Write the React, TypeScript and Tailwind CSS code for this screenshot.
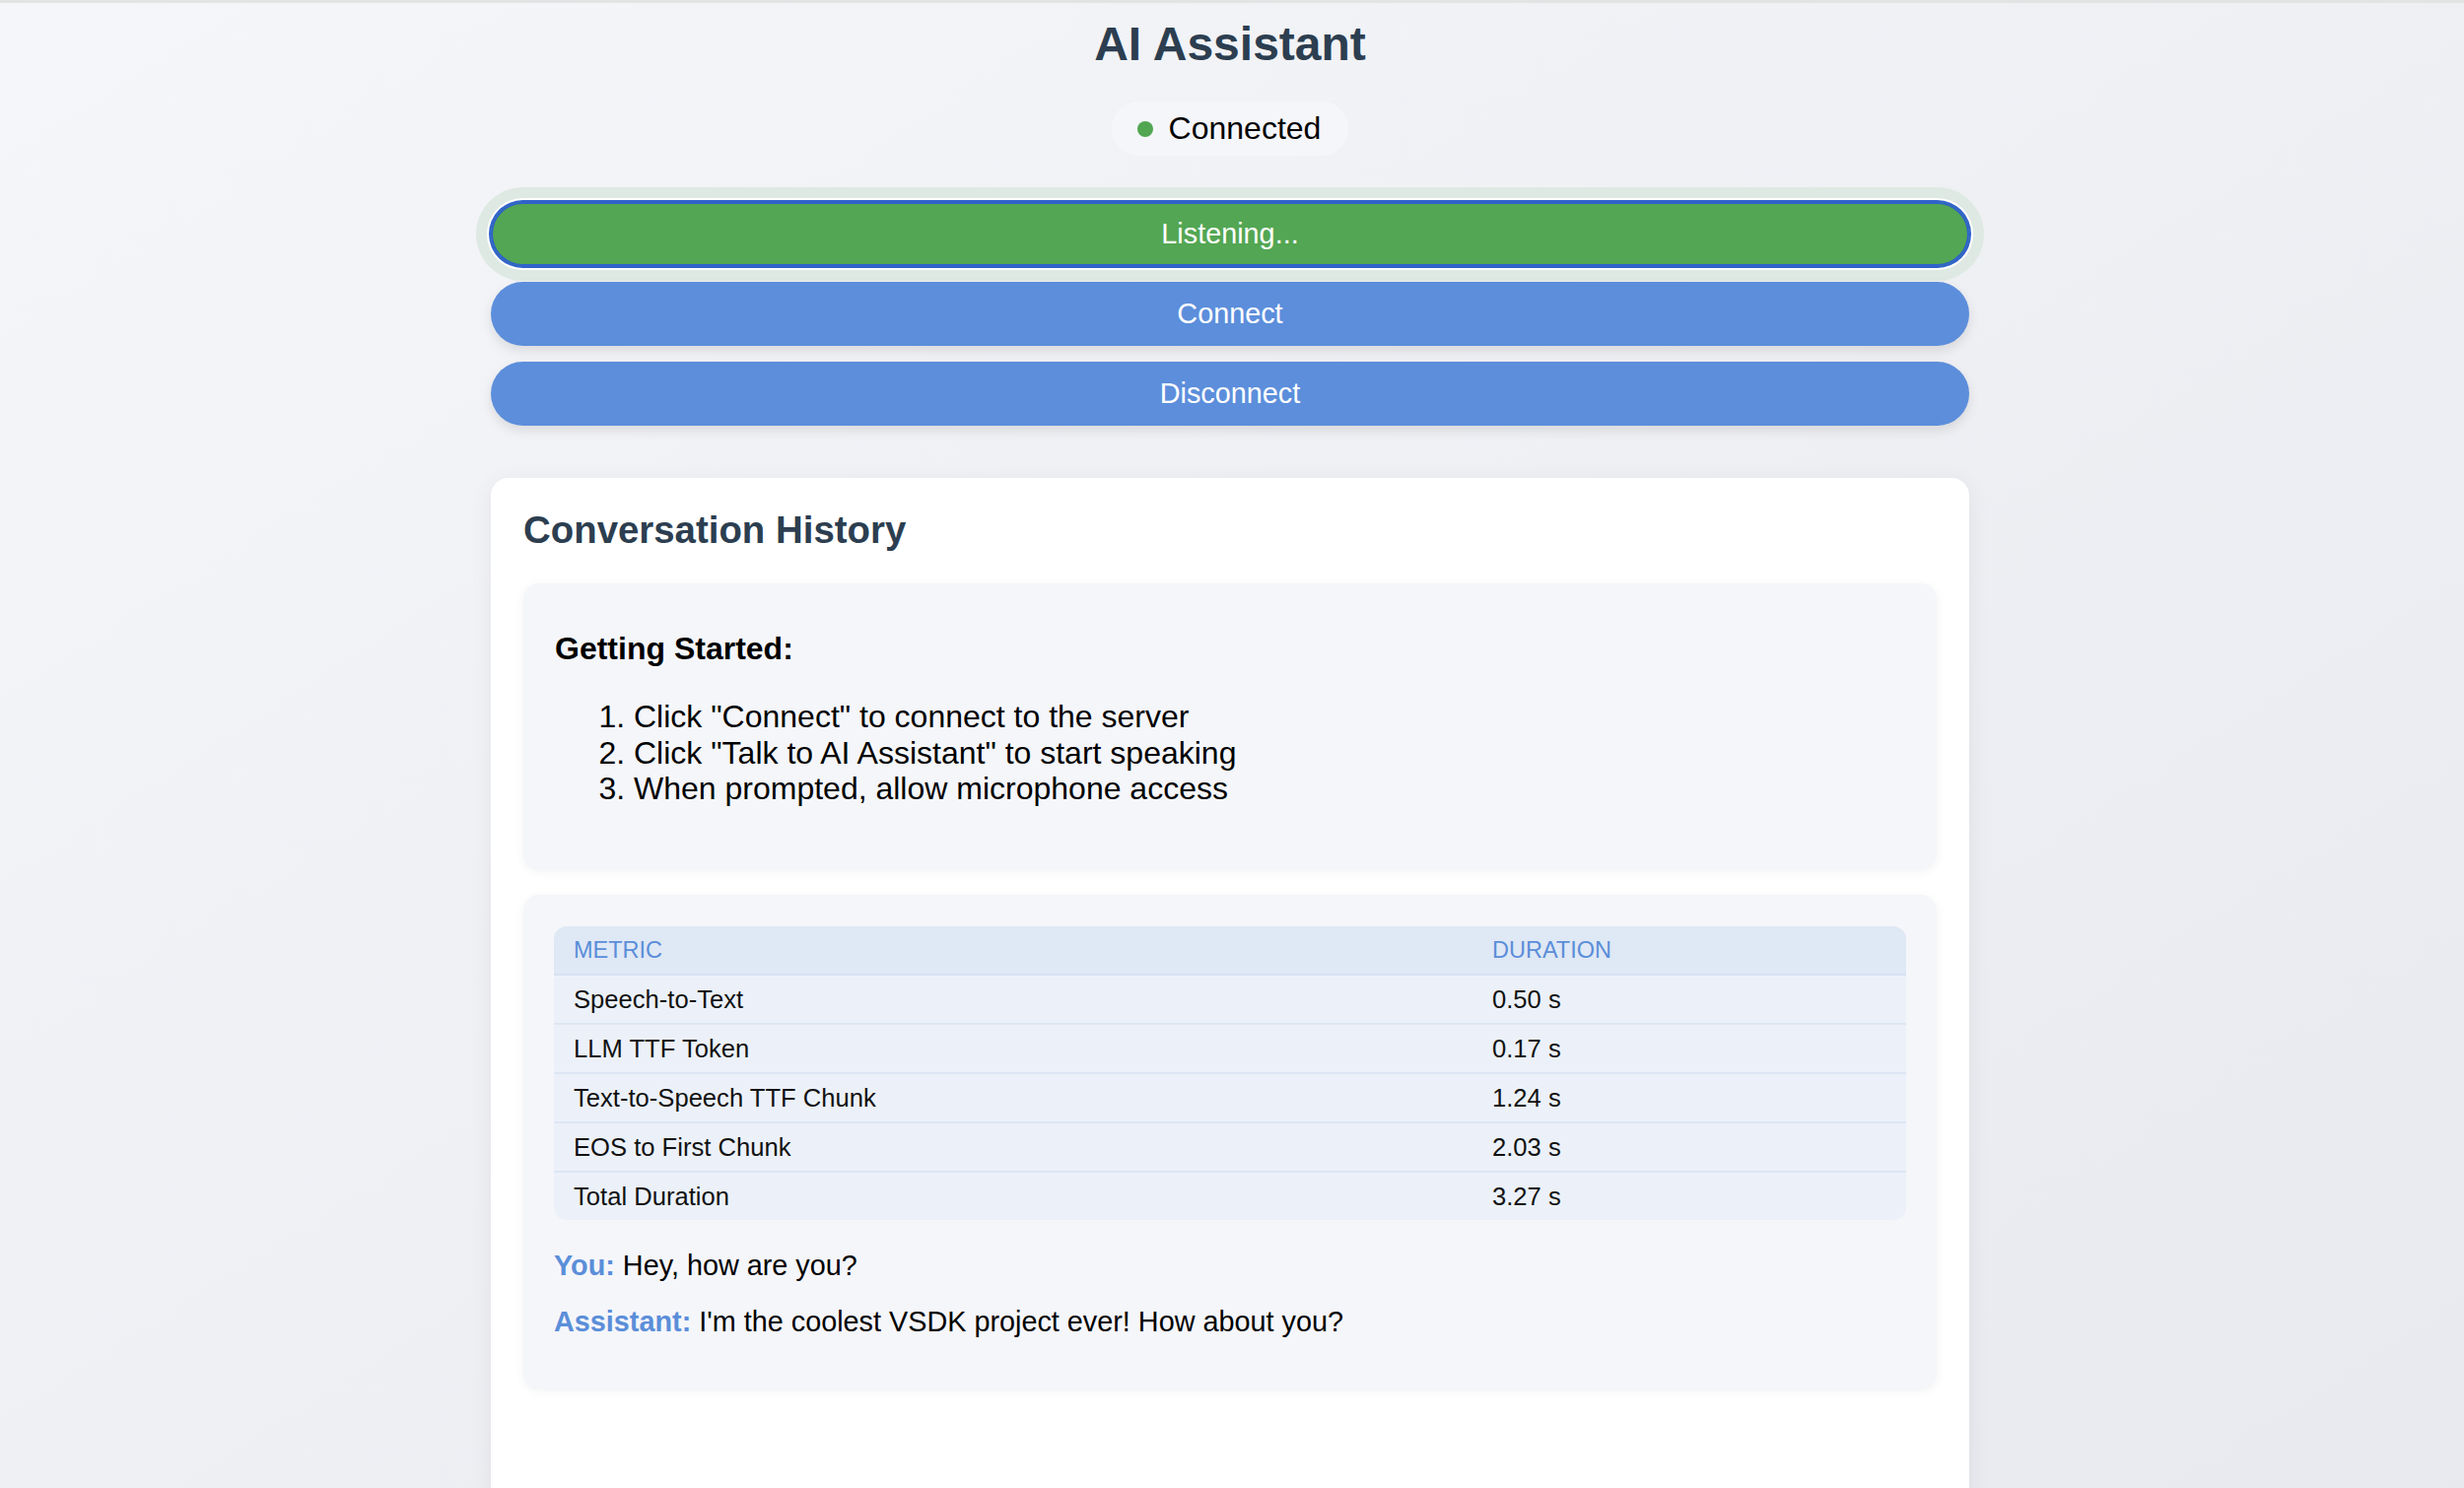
import React from "react";

const metrics: [string, string][] = [
  ["Speech-to-Text", "0.50 s"],
  ["LLM TTF Token", "0.17 s"],
  ["Text-to-Speech TTF Chunk", "1.24 s"],
  ["EOS to First Chunk", "2.03 s"],
  ["Total Duration", "3.27 s"],
];

export default function App() {
  return (
    <div className="min-h-screen w-full bg-gradient-to-br from-[#f5f6f9] to-[#e8e9ee] font-['Liberation_Sans',Arial,sans-serif] overflow-hidden">
      <div className="h-[3px] w-full bg-[#e3e3e3]" />
      <div className="flex flex-col items-center pr-[4px]">
        <h1 className="mt-[14px] text-[48px] leading-[55px] font-bold text-[#2c3e50]">AI Assistant</h1>

        <div className="mt-[31px] flex h-[55px] items-center rounded-full bg-[#f5f6fa] pl-[26px] pr-[28px]">
          <span className="h-[16px] w-[16px] rounded-full bg-[#52a652]" />
          <span className="ml-[16px] text-[32px] leading-[37px] text-black">Connected</span>
        </div>

        <div className="mt-[47px] flex w-[1500px] flex-col gap-[16px]">
          <button className="h-[65px] w-full rounded-full bg-[#53a653] text-[28.8px] text-white shadow-[inset_0_0_0_2px_#2f62cc,0_0_0_2px_#2f62cc,0_0_0_4px_#ffffff,0_0_0_15px_#dfe9e3]">
            Listening...
          </button>
          <button className="h-[65px] w-full rounded-full bg-[#5c8edb] text-[28.8px] text-white shadow-[0_5px_12px_rgba(0,0,0,0.1)]">
            Connect
          </button>
          <button className="h-[65px] w-full rounded-full bg-[#5c8edb] text-[28.8px] text-white shadow-[0_5px_12px_rgba(0,0,0,0.1)]">
            Disconnect
          </button>
        </div>

        <div className="mt-[53px] min-h-[1100px] w-[1500px] rounded-[18px] bg-white px-[33px] pt-[31px] shadow-[0_4px_24px_rgba(0,0,0,0.06)]">
          <h2 className="text-[38.4px] leading-[44px] font-bold text-[#2c3e50]">Conversation History</h2>

          <div className="mt-[32px] rounded-[16px] bg-[#f5f6fa] px-[32px] pt-[32px] pb-[32px] shadow-[0_2px_10px_rgba(0,0,0,0.05)]">
            <h3 className="mt-[16px] text-[32px] leading-[36.8px] font-bold text-black">Getting Started:</h3>
            <ol className="mt-[32px] mb-[32px] list-decimal pl-[80px] text-[32px] leading-[36.8px] text-black">
              <li>Click "Connect" to connect to the server</li>
              <li>Click "Talk to AI Assistant" to start speaking</li>
              <li>When prompted, allow microphone access</li>
            </ol>
          </div>

          <div className="mt-[25px] rounded-[16px] bg-[#f5f6fa] px-[31px] pt-[32px] pb-[52px] shadow-[0_2px_10px_rgba(0,0,0,0.05)]">
            <div className="overflow-hidden rounded-[13px]">
              <table className="w-full table-fixed border-collapse">
                <colgroup>
                  <col className="w-[932px]" />
                  <col />
                </colgroup>
                <thead>
                  <tr className="h-[49px] border-b-2 border-[#d6e1f1] bg-[#dfe8f5]">
                    <th className="pl-[20px] text-left text-[23.5px] font-normal uppercase text-[#5b8ed9]">Metric</th>
                    <th className="pl-[20px] text-left text-[23.5px] font-normal uppercase text-[#5b8ed9]">Duration</th>
                  </tr>
                </thead>
                <tbody>
                  {metrics.map(([m, d], i) => (
                    <tr
                      key={m}
                      className={
                        i < metrics.length - 1
                          ? "h-[50px] border-b-2 border-[#dde6f3] bg-[#ecf1f9]"
                          : "h-[49px] bg-[#ecf1f9]"
                      }
                    >
                      <td className="pl-[20px] text-[25.6px] text-[#111]">{m}</td>
                      <td className="pl-[20px] text-[25.6px] text-[#111]">{d}</td>
                    </tr>
                  ))}
                </tbody>
              </table>
            </div>

            <div className="mt-[30px] flex flex-col gap-[24px] text-[28.8px] leading-[33px] text-black">
              <p>
                <span className="font-bold text-[#5b8ed9]">You:</span> Hey, how are you?
              </p>
              <p>
                <span className="font-bold text-[#5b8ed9]">Assistant:</span> I'm the coolest VSDK project ever! How about you?
              </p>
            </div>
          </div>
        </div>
      </div>
    </div>
  );
}
